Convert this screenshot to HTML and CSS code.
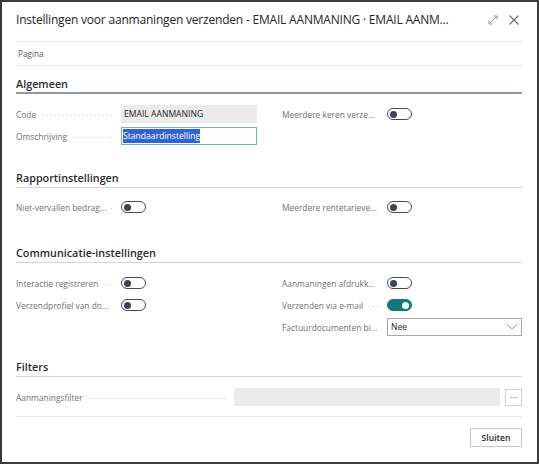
FILE: index.html
```html
<!DOCTYPE html>
<html lang="nl">
<head>
<meta charset="utf-8">
<title>Instellingen voor aanmaningen verzenden</title>
<link rel="stylesheet" href="styles.css">
</head>
<body>
<div class="dialog">
  <header class="titlebar">
    <h1 class="title">Instellingen voor aanmaningen verzenden - EMAIL AANMANING · EMAIL AANM...</h1>
    <div class="win-actions">
      <svg class="icon" width="12" height="12" viewBox="0 0 12 12" aria-hidden="true"><path d="M2 10 L10 2 M6.5 2 H10 V5.5 M2 6.5 V10 H5.5" fill="none" stroke="#9a9a9a" stroke-width="1"/></svg>
      <svg class="icon" width="12" height="12" viewBox="0 0 12 12" aria-hidden="true"><path d="M1.5 1.5 L10.5 10.5 M10.5 1.5 L1.5 10.5" fill="none" stroke="#6a6a6a" stroke-width="1.1"/></svg>
    </div>
  </header>
  <nav class="tabs"><span class="tab">Pagina</span></nav>

  <main class="content">
    <section class="group group-first">
      <h2 class="group-title active">Algemeen</h2>
      <div class="cols">
        <div class="col">
          <div class="field"><span class="label"><span class="ltext">Code</span><span class="leader"></span></span><div class="input readonly">EMAIL AANMANING</div></div>
          <div class="field"><span class="label"><span class="ltext">Omschrijving</span><span class="leader"></span></span><div class="input focused"><span class="sel">Standaardinstelling</span></div></div>
        </div>
        <div class="col">
          <div class="field"><span class="label"><span class="ltext">Meerdere keren verze...</span><span class="leader"></span></span><span class="toggle"></span></div>
        </div>
      </div>
    </section>

    <section class="group group-rapport">
      <h2 class="group-title">Rapportinstellingen</h2>
      <div class="cols">
        <div class="col">
          <div class="field trow"><span class="label"><span class="ltext">Niet-vervallen bedrag...</span><span class="leader"></span></span><span class="toggle"></span></div>
        </div>
        <div class="col">
          <div class="field trow"><span class="label"><span class="ltext">Meerdere rentetarieve...</span><span class="leader"></span></span><span class="toggle"></span></div>
        </div>
      </div>
    </section>

    <section class="group group-comm">
      <h2 class="group-title">Communicatie-instellingen</h2>
      <div class="cols">
        <div class="col">
          <div class="field trow"><span class="label"><span class="ltext">Interactie registreren</span><span class="leader"></span></span><span class="toggle"></span></div>
          <div class="field trow"><span class="label"><span class="ltext">Verzendprofiel van do...</span><span class="leader"></span></span><span class="toggle"></span></div>
        </div>
        <div class="col">
          <div class="field trow"><span class="label"><span class="ltext">Aanmaningen afdrukk...</span><span class="leader"></span></span><span class="toggle"></span></div>
          <div class="field trow"><span class="label"><span class="ltext">Verzenden via e-mail</span><span class="leader"></span></span><span class="toggle on"></span></div>
          <div class="field trow"><span class="label"><span class="ltext">Factuurdocumenten bi...</span><span class="leader"></span></span>
            <div class="input select"><span>Nee</span>
              <svg width="10" height="6" viewBox="0 0 10 6" aria-hidden="true"><path d="M0.5 0.5 L5 5 L9.5 0.5" fill="none" stroke="#8a8a8a" stroke-width="0.9"/></svg>
            </div>
          </div>
        </div>
      </div>
    </section>

    <section class="group group-filters">
      <h2 class="group-title">Filters</h2>
      <div class="field wide"><span class="label"><span class="ltext">Aanmaningsfilter</span><span class="leader"></span></span><div class="input readonly grow"></div><button class="dots" type="button">···</button></div>
    </section>
  </main>

  <footer class="footer">
    <button class="btn" type="button">Sluiten</button>
  </footer>
</div>
</body>
</html>
```

FILE: styles.css
```css
* { box-sizing: border-box; }

html, body {
  margin: 0;
  padding: 0;
  background: #ffffff;
}

body {
  font-family: "Open Sans", "Noto Sans", "Liberation Sans", sans-serif;
  color: #212121;
}

.dialog {
  width: 539px;
  height: 464px;
  border: 2px solid #3a3a3a;
  background: #ffffff;
  display: flex;
  flex-direction: column;
}

.titlebar {
  margin: 0 14px;
  height: 40px;
  padding-bottom: 4px;
  display: flex;
  align-items: center;
  border-bottom: 1px solid #e6e6e6;
}

.title {
  margin: 0;
  flex: 1;
  font-size: 12px;
  letter-spacing: -0.2px;
  font-weight: 400;
  color: #262626;
  white-space: nowrap;
  overflow: hidden;
}

.win-actions {
  display: flex;
  gap: 9px;
  align-items: center;
  margin-right: 3px;
}

.icon { display: block; }

.tabs {
  margin: 0 14px;
  height: 24px;
  display: flex;
  align-items: center;
  padding-left: 2px;
  border-bottom: 1px solid #e6e6e6;
}

.tab {
  font-size: 8.2px;
  color: #5a5a5a;
}

.content {
  margin: 0 15px 0 14px;
}

.group-title {
  margin: 0;
  font-size: 10.8px;
  font-weight: 600;
  line-height: 16px;
  color: #2a2a2a;
  border-bottom: 1px solid #d4d4d4;
  padding-bottom: 1px;
}

.group-title.active {
  border-bottom: 2px solid #8d97a8;
  padding-bottom: 0;
}

.group-first { padding-top: 10px; }
.group-first .cols { margin-top: 11px; }

.group-rapport { padding-top: 25px; }
.group-rapport .cols { margin-top: 8px; }

.group-comm { padding-top: 27px; }
.group-comm .cols { margin-top: 9px; }

.group-filters { padding-top: 21px; }
.group-filters .field { margin-top: 11px; }

.cols {
  display: grid;
  grid-template-columns: 241px 240px;
  column-gap: 25px;
}

.col {
  display: flex;
  flex-direction: column;
  gap: 4px;
}

.field {
  display: flex;
  align-items: center;
  height: 18px;
}

.field.trow { height: 22px; }
.col:has(.trow) { gap: 0; }

.label {
  width: 105px;
  flex: none;
  display: flex;
  align-items: center;
  padding-right: 6px;
  font-size: 8.4px;
  color: #707070;
  white-space: nowrap;
  overflow: hidden;
}

.ltext { flex: none; }

.leader {
  flex: 1;
  min-width: 2px;
  height: 1px;
  margin-left: 5px;
  margin-top: 2px;
  background-image: linear-gradient(to right, #c4c4c4 1px, transparent 1px);
  background-size: 4px 1px;
  background-repeat: repeat-x;
  background-position: right center;
}

.input {
  width: 136px;
  height: 18px;
  display: flex;
  align-items: center;
  padding: 0 3px;
  font-size: 8.6px;
  color: #212121;
  white-space: nowrap;
}

.readonly {
  background: #ebebeb;
}

.focused {
  border: 1px solid #6fb3b6;
  padding: 0 1px;
  height: 18px;
}

.sel {
  background: #2f63d3;
  color: #ffffff;
  padding: 1px 0;
  line-height: 12px;
}

.select {
  border: 1px solid #a8a8a8;
  justify-content: space-between;
  padding: 0 4px 0 3px;
  height: 18px;
}

.toggle {
  position: relative;
  width: 25px;
  height: 12px;
  border: 1px solid #4a4a4a;
  border-radius: 6px;
  background: #ffffff;
  flex: none;
}

.toggle::after {
  content: "";
  position: absolute;
  left: 2px;
  top: 1.5px;
  width: 7px;
  height: 7px;
  border-radius: 50%;
  background: #3a4456;
}

.toggle.on {
  background: #0f7b7f;
  border-color: #0f7b7f;
}

.toggle.on::after {
  left: auto;
  right: 2px;
  background: #ffffff;
}

.field.wide .label {
  width: 218px;
}

.grow {
  flex: 1;
  width: auto;
}

.dots {
  width: 17px;
  height: 17px;
  margin-left: 5px;
  padding: 0;
  border: 1px solid #d0d0d0;
  background: #ffffff;
  font-family: inherit;
  font-size: 9px;
  color: #555555;
  line-height: 1;
}

.footer {
  margin: 10px 15px 0 14px;
  border-top: 1px solid #e6e6e6;
  padding-top: 11px;
  display: flex;
  justify-content: flex-end;
}

.btn {
  width: 52px;
  height: 19px;
  padding: 0;
  border: 1px solid #c4c4c4;
  background: #ffffff;
  font-family: inherit;
  font-size: 8.6px;
  font-weight: 600;
  color: #262626;
}
```
